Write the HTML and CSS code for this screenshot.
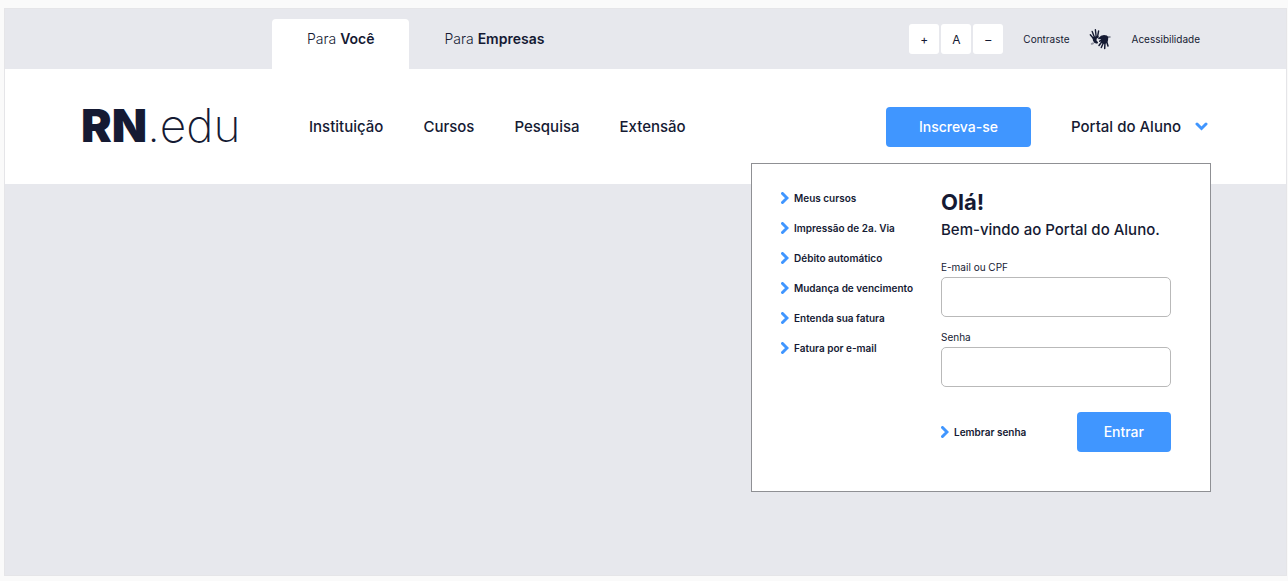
FILE: index.html
```html
<!DOCTYPE html>
<html lang="pt-BR">
<head>
<meta charset="utf-8">
<meta name="viewport" content="width=device-width, initial-scale=1">
<title>RN.edu</title>
<link rel="stylesheet" href="styles.css">
</head>
<body>
<svg class="sprite" aria-hidden="true">
  <symbol id="arrow" viewBox="0 0 8 12"><path d="M1.500 1.500 6 6l-4.500 4.500" fill="none" stroke="currentColor" stroke-width="3" stroke-linecap="round" stroke-linejoin="miter"/></symbol>
</svg>
<div class="page">
  <div class="topbar">
    <nav class="tabs" aria-label="Perfil">
      <a class="tab tab-active" href="#">Para <b>Você</b></a>
      <a class="tab" href="#">Para <b>Empresas</b></a>
    </nav>
    <div class="tools">
      <div class="sizes">
        <button class="size" type="button" aria-label="Aumentar texto">+</button>
        <button class="size" type="button" aria-label="Texto normal">A</button>
        <button class="size" type="button" aria-label="Diminuir texto">–</button>
      </div>
      <a class="tool" href="#">Contraste</a>
      <a class="tool access" href="#">
        <svg class="hands" viewBox="0 0 22 22" aria-hidden="true">
          <g fill="none" stroke="currentColor" stroke-linecap="round">
            <path d="M4.500 10.500 1.300 6.800M5.500 9.500 3.200 3.500M7.200 9 6.400 1.800M8.500 9 9.600 3" stroke-width="1.400"/>
            <path d="M13 13.500 10 17.500M14.500 14.500 12.300 19.500M16 14.500 15.700 20.500M17.500 13 19 18" stroke-width="1.500"/>
            <path d="M10.800 13.200 12.500 12" stroke-width="1.600"/>
          </g>
          <path d="M3.500 9.500 6 8.500 9.200 8.300 10.200 9 7.600 10.800 7.600 12.700 9.200 14.300 8.200 15.800 5.500 15 4 12.800Z" fill="currentColor"/>
          <path d="M9.600 11.300 9 10.500 12 7.800 15 7 17.800 7.400 19.300 9 19 12.500 17.800 15 15.500 16 13 15.200 11.800 13.200 12 11Z" fill="currentColor"/>
          <path d="M2.800 15.800 4 15.300M19.600 9H20.800" fill="none" stroke="currentColor" stroke-width="2" stroke-linecap="round" opacity=".4"/>
        </svg>
        Acessibilidade
      </a>
    </div>
  </div>
  <header class="header">
    <a class="logo" href="#"><b>RN</b>.edu</a>
    <nav class="menu" aria-label="Principal">
      <a href="#">Instituição</a>
      <a href="#">Cursos</a>
      <a href="#">Pesquisa</a>
      <a href="#">Extensão</a>
    </nav>
    <button class="primary enroll" type="button">Inscreva-se</button>
    <div class="portal">
      <button class="portal-toggle" type="button" aria-expanded="true" aria-controls="portal-panel">
        Portal do Aluno
        <svg class="chevron" viewBox="0 0 13 9" aria-hidden="true"><path d="M2 2l4.500 4.500L11 2" fill="none" stroke="currentColor" stroke-width="3" stroke-linecap="round"/></svg>
      </button>
      <section class="panel" id="portal-panel">
        <ul class="links">
          <li><a class="arrow-link" href="#"><svg class="arrow"><use href="#arrow"/></svg>Meus cursos</a></li>
          <li><a class="arrow-link" href="#"><svg class="arrow"><use href="#arrow"/></svg>Impressão de 2a. Via</a></li>
          <li><a class="arrow-link" href="#"><svg class="arrow"><use href="#arrow"/></svg>Débito automático</a></li>
          <li><a class="arrow-link" href="#"><svg class="arrow"><use href="#arrow"/></svg>Mudança de vencimento</a></li>
          <li><a class="arrow-link" href="#"><svg class="arrow"><use href="#arrow"/></svg>Entenda sua fatura</a></li>
          <li><a class="arrow-link" href="#"><svg class="arrow"><use href="#arrow"/></svg>Fatura por e-mail</a></li>
        </ul>
        <form class="login">
          <h2>Olá!</h2>
          <p>Bem-vindo ao Portal do Aluno.</p>
          <label for="user">E-mail ou CPF</label>
          <input id="user" type="text">
          <label for="password">Senha</label>
          <input id="password" type="password">
          <div class="actions">
            <a class="arrow-link" href="#"><svg class="arrow"><use href="#arrow"/></svg>Lembrar senha</a>
            <button class="primary" type="button">Entrar</button>
          </div>
        </form>
      </section>
    </div>
  </header>
</div>
</body>
</html>
```

FILE: styles.css
```css
* { box-sizing: border-box; }

body {
  margin: 0;
  min-height: 100vh;
  display: flex;
  padding: 8px 1px 5px 4px;
  background: #fafafa;
  color: #151a33;
  font-family: Inter, "Open Sans", sans-serif;
  font-size: 14px;
  font-weight: 500;
}

a { color: inherit; text-decoration: none; }

button { font: inherit; color: inherit; border: 0; padding: 0; cursor: pointer; }

.sprite { position: absolute; width: 0; height: 0; }

.page {
  flex: 1;
  background: #e7e8ed;
  border: 1px solid #e5e5e8;
}

.topbar {
  display: flex;
  justify-content: space-between;
  align-items: flex-end;
  padding: 10px 86px 0 267px;
}

.tabs { display: flex; }

.tab {
  padding: 0 35px 10px;
  line-height: 40px;
  font-weight: 300;
  border-radius: 4px 4px 0 0;
}

.tab b { font-weight: 600; }

.tab-active { background: #fff; }

.tools {
  display: flex;
  align-items: center;
  gap: 20px;
  padding-bottom: 15px;
  font-size: 10px;
  font-weight: 400;
}

.sizes { display: flex; gap: 2px; }

.size {
  width: 30px;
  height: 30px;
  font-size: 12px;
  background: #fff;
  border-radius: 3px;
}

.access { display: flex; align-items: center; gap: 20px; }

.hands { width: 22px; height: 22px; }

.header {
  display: flex;
  align-items: center;
  padding: 0 78px 0 76px;
  min-height: 115px;
  background: #fff;
  font-size: 15px;
}

.logo {
  flex: 0 0 228px;
  padding-bottom: 4px;
  font-size: 46px;
  line-height: 48px;
  font-weight: 200;
}

.logo b { font-weight: 900; }

.menu { display: flex; flex: 1; gap: 40px; }

.primary {
  height: 40px;
  padding: 0 27px;
  font-size: 14px;
  background: #4096ff;
  color: #fff;
  border-radius: 4px;
}

.enroll { padding: 0 33px; margin-right: 40px; }

.portal { position: relative; }

.portal-toggle {
  display: flex;
  align-items: center;
  gap: 14px;
  height: 40px;
  background: none;
}

.chevron { width: 13px; height: 9px; color: #4096ff; }

.panel {
  position: absolute;
  top: 100%;
  right: -3px;
  margin-top: 16px;
  width: 460px;
  display: grid;
  grid-template-columns: 160px 1fr;
  padding: 19px 39px 39px 29px;
  background: #fff;
  border: 1px solid #8f9094;
}

.links { list-style: none; margin: 0; padding: 0; line-height: 30px; }

.arrow-link {
  display: flex;
  align-items: center;
  gap: 5px;
  font-size: 10px;
  font-weight: 600;
  white-space: nowrap;
}

.arrow { width: 8px; height: 12px; color: #4096ff; }

.login { display: flex; flex-direction: column; padding-top: 5px; }

.login h2 { margin: 0; font-size: 22px; line-height: 28px; font-weight: 700; }

.login p { margin: 0 0 13px; line-height: 28px; white-space: nowrap; }

.login label { font-size: 10px; line-height: 20px; font-weight: 400; }

.login input {
  width: 100%;
  height: 40px;
  margin: 0 0 10px;
  padding: 0 12px;
  font: inherit;
  color: inherit;
  background: #fff;
  border: 1px solid #b9b9b9;
  border-radius: 5px;
}

.actions {
  display: flex;
  align-items: center;
  justify-content: space-between;
  margin-top: 15px;
}
```
